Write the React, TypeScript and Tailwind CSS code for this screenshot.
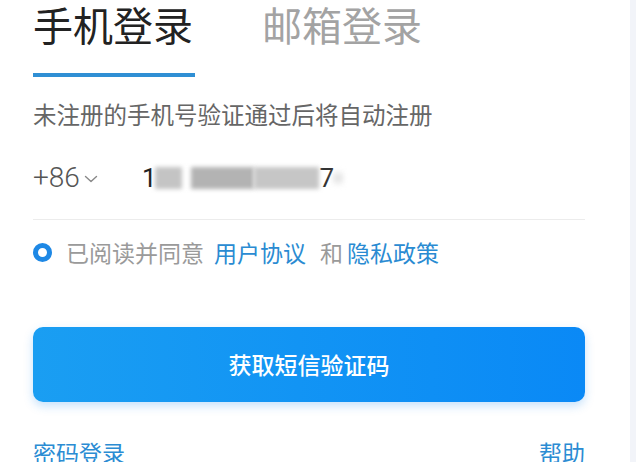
import React from "react";

const cjk = { fontFamily: '"Noto Sans CJK SC", "Noto Sans", sans-serif' };

export default function App() {
  return (
    <div className="flex h-[462px] w-[636px] overflow-hidden bg-white" style={cjk}>
      <div className="flex w-[630px] shrink-0 flex-col pl-[33px] pr-[45px]">
        {/* Tabs */}
        <div className="flex shrink-0 items-start">
          <span className="text-[40px] leading-[48px] text-[#222]">手机登录</span>
          <span className="ml-[69px] text-[40px] leading-[48px] text-[#a3a3a3]">邮箱登录</span>
        </div>
        <div className="mt-[25px] h-[4px] w-[162px] shrink-0 bg-[#2f8fd4]" />

        {/* Subtitle */}
        <div className="mt-[23px] shrink-0 text-[23.5px] leading-[28px] text-[#666]">未注册的手机号验证通过后将自动注册</div>

        {/* Phone row */}
        <div className="mt-[35px] flex h-[30px] shrink-0 items-center">
          <span className="text-[28px] font-light leading-[30px] text-[#555]" style={{ fontFamily: '"Roboto", "Noto Sans", sans-serif' }}>+86</span>
          <svg className="ml-[4px] mt-[2px]" width="14" height="8" viewBox="0 0 14 8" fill="none">
            <path d="M1.5 1.5 L7 6.5 L12.5 1.5" stroke="#888" strokeWidth="1.4" strokeLinecap="round" strokeLinejoin="round" />
          </svg>
          <div className="relative ml-[44px] flex h-[26px] w-[200px] items-center">
            <span className="text-[26px] leading-[26px] text-[#222]" style={{ fontFamily: '"Roboto", sans-serif' }}>1</span>
            <div className="-ml-[2px] h-[22px] w-[28px] bg-[#c4c4c4] blur-[2px]" />
            <div className="ml-[9px] h-[22px] w-[64px] bg-[#b3b3b3] blur-[2px]" />
            <div className="h-[22px] w-[66px] bg-[#c6c6c6] blur-[2px]" />
            <span className="text-[26px] leading-[26px] text-[#333]" style={{ fontFamily: '"Roboto", sans-serif' }}>7</span>
            <div className="h-[10px] w-[8px] bg-[#dddddd] blur-[3px]" />
          </div>
        </div>

        {/* Divider */}
        <div className="mt-[26px] h-px w-full shrink-0 bg-[#ececec]" />

        {/* Agreement */}
        <div className="mt-[20px] flex h-[24px] shrink-0 items-center text-[23px] leading-[24px]">
          <span className="box-border h-[19px] w-[19px] rounded-full border-[5px] border-[#1e88e5]" />
          <span className="ml-[14px] text-[#9a9a9a]">已阅读并同意</span>
          <span className="ml-[10px] text-[#2a8bd2]">用户协议</span>
          <span className="ml-[14px] text-[#9a9a9a]">和</span>
          <span className="ml-[4px] text-[#2a8bd2]">隐私政策</span>
        </div>

        {/* Button */}
        <button className="mt-[63px] flex h-[75px] w-full shrink-0 items-center justify-center rounded-[10px] bg-gradient-to-r from-[#1a9ef2] to-[#0a89f6] text-[23px] font-medium text-white shadow-[0_4px_10px_rgba(30,140,240,0.25)]" style={cjk}>
          获取短信验证码
        </button>

        {/* Bottom links */}
        <div className="mt-[36px] flex shrink-0 justify-between text-[23px] leading-[28px] text-[#2b8cd3]">
          <span>密码登录</span>
          <span>帮助</span>
        </div>
      </div>
      <div className="h-full flex-1 bg-[#f2f4f9]" />
    </div>
  );
}
